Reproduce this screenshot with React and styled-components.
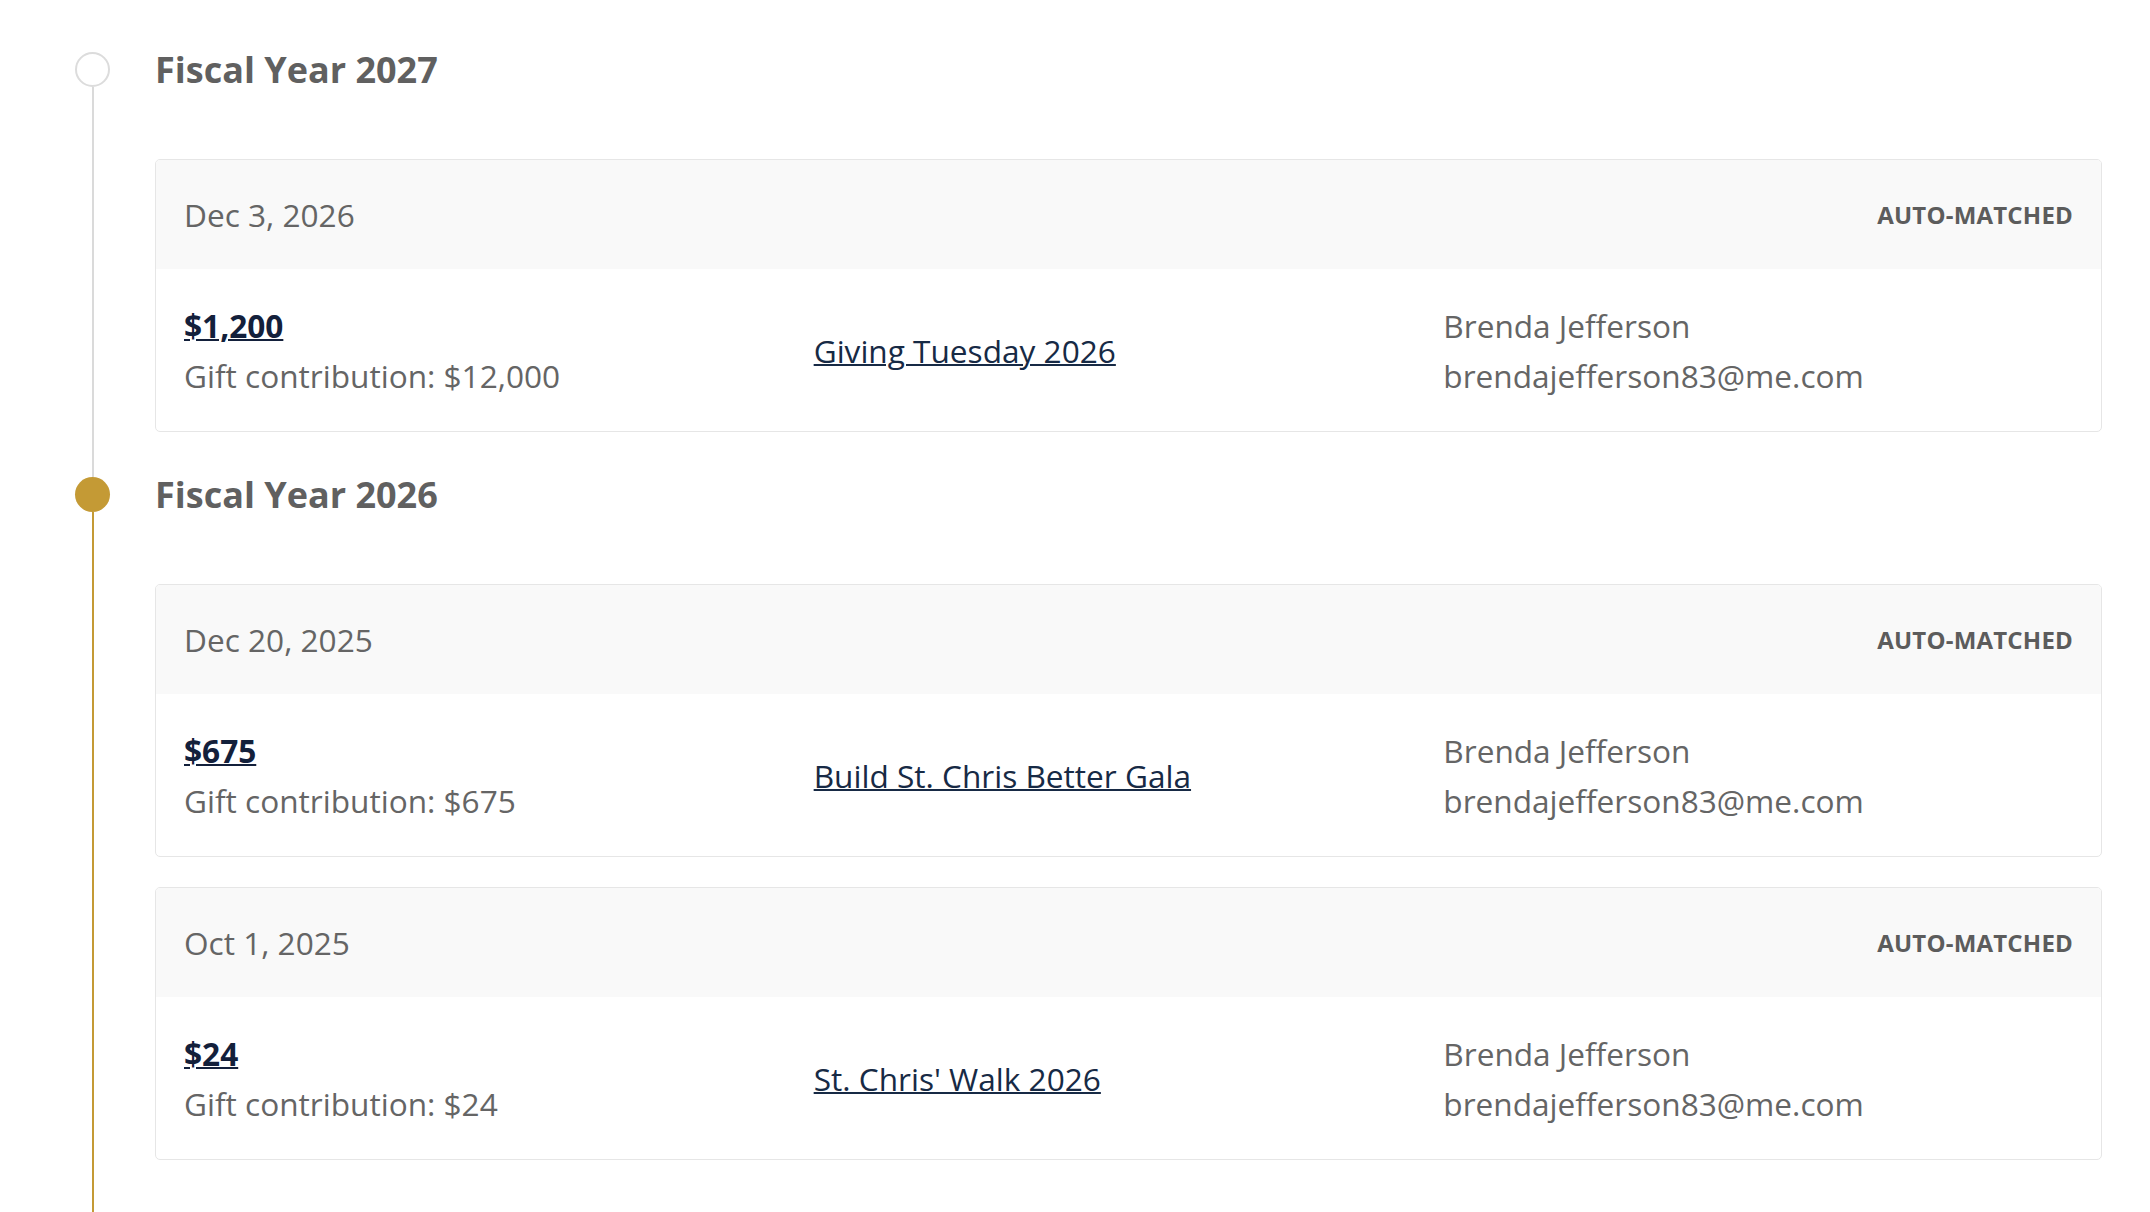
import React from "react";
import styled, { createGlobalStyle } from "styled-components";

const GlobalStyle = createGlobalStyle`
  html, body {
    margin: 0;
    padding: 0;
    background: #ffffff;
  }
  body {
    font-family: "Open Sans", "Noto Sans", sans-serif;
    color: #656565;
  }
`;

const Page = styled.main`
  padding: 52px 48px 0 75px;
`;

const Section = styled.section`
  display: grid;
  grid-template-columns: 35px 1fr;
  grid-template-rows: 35px auto;
  column-gap: 45px;
`;

const Dot = styled.span`
  width: 35px;
  height: 35px;
  border-radius: 50%;
  box-sizing: border-box;
  border: ${(p) => (p.$active ? "none" : "2px solid #dcdcdc")};
  background: ${(p) => (p.$active ? "#c49a35" : "#ffffff")};
`;

const Rail = styled.div`
  grid-column: 1;
  justify-self: center;
  width: 2px;
  background: ${(p) => (p.$active ? "#c49a35" : "#dadada")};
`;

const Title = styled.h2`
  margin: 0;
  font-size: 36px;
  line-height: 35px;
  font-weight: 700;
  color: #606060;
  white-space: nowrap;
`;

const Entries = styled.div`
  display: flex;
  flex-direction: column;
  gap: 30px;
  padding: 72px 0 ${(p) => (p.$last ? "70px" : "45px")};
`;

const Card = styled.article`
  border: 1px solid #e6e6e6;
  border-radius: 5px;
  overflow: hidden;
  background: #ffffff;
`;

const CardHeader = styled.header`
  display: flex;
  justify-content: space-between;
  align-items: center;
  height: 109px;
  box-sizing: border-box;
  padding: 0 28px 0 28px;
  background: #f9f9f9;
`;

const DateText = styled.span`
  font-size: 31.6px;
  color: #656565;
`;

const Status = styled.span`
  font-size: 24px;
  font-weight: 700;
  letter-spacing: 0.2px;
  color: #5c5c5c;
  text-transform: uppercase;
`;

const CardBody = styled.div`
  display: grid;
  grid-template-columns: 1fr 1fr 1fr;
  align-items: center;
  padding: 32px 28px 30px 28px;
  font-size: 31.6px;
  line-height: 50px;
`;

const Column = styled.div`
  display: flex;
  flex-direction: column;
  min-width: 0;
  white-space: nowrap;
`;

const Amount = styled.a`
  align-self: flex-start;
  font-weight: 700;
  color: #13203b;
  text-decoration: underline;
  text-decoration-thickness: 2px;
`;

const Muted = styled.span`
  color: #656565;
`;

const EventLink = styled.a`
  align-self: flex-start;
  color: #172a45;
  text-decoration: underline;
  text-decoration-thickness: 2px;
`;

const sections = [
  {
    year: "Fiscal Year 2027",
    active: false,
    gifts: [
      {
        date: "Dec 3, 2026",
        amount: "$1,200",
        contribution: "$12,000",
        event: "Giving Tuesday 2026",
      },
    ],
  },
  {
    year: "Fiscal Year 2026",
    active: true,
    gifts: [
      {
        date: "Dec 20, 2025",
        amount: "$675",
        contribution: "$675",
        event: "Build St. Chris Better Gala",
      },
      {
        date: "Oct 1, 2025",
        amount: "$24",
        contribution: "$24",
        event: "St. Chris' Walk 2026",
      },
    ],
  },
];

function GiftCard({ gift }) {
  return (
    <Card>
      <CardHeader>
        <DateText>{gift.date}</DateText>
        <Status>Auto-matched</Status>
      </CardHeader>
      <CardBody>
        <Column>
          <Amount href="#">{gift.amount}</Amount>
          <Muted>Gift contribution: {gift.contribution}</Muted>
        </Column>
        <Column>
          <EventLink href="#">{gift.event}</EventLink>
        </Column>
        <Column>
          <Muted>Brenda Jefferson</Muted>
          <Muted>brendajefferson83@me.com</Muted>
        </Column>
      </CardBody>
    </Card>
  );
}

export default function App() {
  return (
    <>
      <GlobalStyle />
      <Page>
        {sections.map((s, i) => (
          <Section key={s.year}>
            <Dot $active={s.active} />
            <Title>{s.year}</Title>
            <Rail $active={s.active} />
            <Entries $last={i === sections.length - 1}>
              {s.gifts.map((g) => (
                <GiftCard key={g.date} gift={g} />
              ))}
            </Entries>
          </Section>
        ))}
      </Page>
    </>
  );
}
